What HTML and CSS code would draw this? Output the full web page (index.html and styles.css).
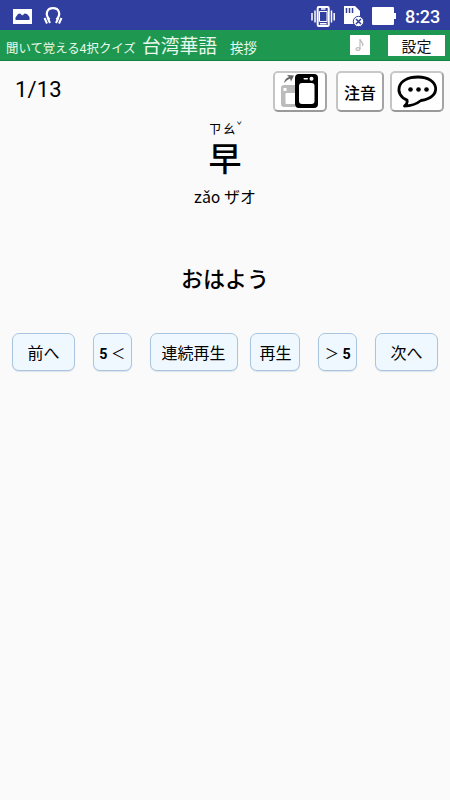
FILE: index.html
```html
<!DOCTYPE html>
<html lang="ja">
<head>
<meta charset="utf-8">
<title>台湾華語</title>
<link rel="stylesheet" href="styles.css">
</head>
<body>
<div class="status">
  <svg class="s-pic" width="19" height="15" viewBox="0 0 19 15"><path fill="#fff" fill-rule="evenodd" d="M0 0h19v15H0zM2.500 11h14V8L14 5l-2.500-.5L9.500 6.500 7 4.500 5 5 2.500 8.500z"/></svg>
  <svg class="s-head" width="20" height="18" viewBox="0 0 20 18" fill="none" stroke="#fff"><path stroke-width="2.200" d="M6.500 12.500C1.500 7 4 1.200 10 1.200s8.500 5.800 3.500 11.300"/><path stroke-width="2" d="M4.500 10.500l2.500 5.500M15.500 10.500l-2.500 5.500M1.500 11l2.500 5.500M18.500 11l-2.500 5.500"/></svg>
  <svg class="s-vib" width="24" height="21" viewBox="0 0 24 21" fill="none" stroke="#fff"><rect x="6.700" y="1" width="11" height="19" rx="1" stroke-width="2"/><path stroke-width="1.500" d="M10 3h4.500M9 17.800h6.500"/><path stroke-width="1" d="M8.500 5.500h7.500v10H8.500z"/><path stroke-width="1.500" d="M4 4.500v12M1 7v7.500M20.500 4.500v12M23.200 7v7.500"/></svg>
  <svg class="s-sd" width="22" height="21" viewBox="0 0 22 21"><path fill="#fff" d="M1 0h11l5 5v13H1z"/><path stroke="#303f9f" stroke-width="1.500" d="M3.500 2v5M6.500 2v5M9.500 2v5"/><circle cx="15.500" cy="15.500" r="5.200" fill="#fff" stroke="#303f9f"/><path d="M13 13l5 5m0-5l-5 5" stroke="#303f9f" stroke-width="1.500"/></svg>
  <svg class="s-bat" width="24" height="18" viewBox="0 0 24 18"><path fill="#fff" d="M1 0h20q1 0 1 1v5h2v6h-2v5q0 1-1 1H1q-1 0-1-1V1q0-1 1-1z"/></svg>
  <span class="clock">8:23</span>
</div>
<header class="bar">
  <span class="quiz">聞いて覚える4択クイズ</span>
  <span class="lang">台湾華語</span>
  <span class="topic">挨拶</span>
  <span class="note"><svg width="10" height="14" viewBox="0 0 10 14" fill="none" stroke="#bbb" stroke-width="1.200"><ellipse cx="3" cy="11" rx="2" ry="1.500" fill="#eee"/><path d="M5 11V1c0 3 4 3 2.500 7"/></svg></span>
  <span class="settings">設定</span>
</header>
<main>
  <div class="tools">
    <span class="count">1/13</span>
    <span class="tool flip"><svg width="54" height="41" viewBox="0 0 54 41"><path fill="#bbb" fill-rule="evenodd" d="M11 14h11v22H11q-3 0-3-3V17q0-3 3-3zM12.500 23v9q0 1 1 1H22V22h-8.500q-1 0-1 1zM10.500 17v3h3v-3z"/><path d="M11 12q1-5 5-6l-2-2 7 .5-3 6-1-3q-3 1-6 4.500z" fill="#666"/><rect x="22" y="3" width="23" height="34" rx="4"/><rect x="26" y="12" width="15.500" height="21" rx="3" fill="#fff"/><rect x="30.500" y="7" width="4.500" height="1.500" rx=".7" fill="#fff"/><circle cx="38.500" cy="7.700" r="2" fill="#fff"/></svg></span>
    <span class="tool zhuyin">注音</span>
    <span class="tool chat"><svg width="54" height="41" viewBox="0 0 54 41"><path d="M17 29C4 24 6 6 28 6s24 21 3 23.500Q24 35 14.500 35 18 32 17 29z" fill="#fff" stroke="#000" stroke-width="2.800" stroke-linejoin="round"/><circle cx="20.500" cy="18.500" r="2.300"/><circle cx="28.500" cy="18.500" r="2.300"/><circle cx="36.500" cy="18.500" r="2.300"/></svg></span>
  </div>
  <section class="card">
    <div class="bopomofo"><span>ㄗ</span><span>ㄠ</span><span class="tone">ˇ</span></div>
    <div class="word">早</div>
    <div class="pinyin">zǎo ザオ</div>
    <div class="meaning">おはよう</div>
  </section>
  <nav class="controls">
    <button class="prev">前へ</button>
    <button class="back5"><b>5</b> ＜</button>
    <button class="loop">連続再生</button>
    <button class="play">再生</button>
    <button class="fwd5">＞ <b>5</b></button>
    <button class="next">次へ</button>
  </nav>
</main>
</body>
</html>
```
FILE: styles.css
```css
* { box-sizing: border-box; }
body {
  margin: 0;
  height: 800px;
  overflow: hidden;
  background: #fafafa;
  color: #000;
  font-family: Roboto, "Noto Sans CJK JP", sans-serif;
  white-space: nowrap;
}
svg { display: block; flex: none; }
.status {
  height: 30px;
  background: #303f9f;
  display: flex;
  align-items: center;
  padding: 2px 10px 0 13px;
  color: #fff;
}
.s-head { margin-left: 11px; }
.s-vib { margin-left: auto; }
.s-sd { margin-left: 8px; }
.s-bat { margin-left: 7px; }
.clock { width: 35px; margin-left: 9px; font-size: 18px; font-weight: 500; letter-spacing: -.1px; }
.bar {
  height: 31px;
  background: #1e9850;
  border-bottom: 1px solid #168043;
  color: #e9f8ed;
  display: flex;
  align-items: center;
  padding: 0 5px 0 6px;
}
.quiz { width: 136px; font-size: 12.400px; padding-top: 5px; }
.lang { width: 88px; font-size: 18.800px; line-height: 28px; padding-top: 3px; }
.topic { font-size: 13.500px; padding-top: 3px; }
.note {
  width: 20px;
  height: 20px;
  margin-left: auto;
  background: #fff;
  display: flex;
  align-items: center;
  justify-content: center;
}
.settings {
  width: 57px;
  height: 21px;
  margin-left: 18px;
  background: #fff;
  color: #111;
  font-size: 15px;
  line-height: 24px;
  text-align: center;
}
.tools { display: flex; padding: 10px 6px 0 15px; height: 53px; }
.count { font-size: 22px; line-height: 38px; margin-right: auto; letter-spacing: .15px; }
.tool {
  width: 54px;
  height: 41px;
  border: 2px solid #b0b0b0;
  border-color: #c8c8c8 #a4a4a4 #999 #c4c4c4;
  border-radius: 5px;
  background: #fff;
  display: flex;
  align-items: center;
  justify-content: center;
}
.zhuyin { width: 48px; margin: 0 6px 0 9px; font-size: 16px; font-weight: 500; }
.card { text-align: center; }
.bopomofo {
  height: 23px;
  display: flex;
  justify-content: center;
  gap: 1px;
  font-size: 13px;
  line-height: 27px;
  font-family: "Noto Sans CJK TC", sans-serif;
}
.tone { width: 5px; font-size: 9px; line-height: 24px; }
.word { height: 43px; font-size: 33px; line-height: 46px; font-weight: 500; }
.pinyin { height: 33px; font-size: 16px; line-height: 35px; }
.meaning { margin-top: 44px; height: 44px; font-size: 22px; line-height: 46px; font-weight: 500; }
.controls { display: flex; padding: 32px 12px 0 12px; justify-content: space-between; }
.controls button {
  height: 38px;
  padding: 0;
  border: 1px solid #a9c5df;
  border-radius: 7px;
  background: #f0f8ff;
  box-shadow: 0 1px 1px #dce3e8;
  color: #000;
  font: 16px Roboto, "Noto Sans CJK JP", sans-serif;
}
.controls b { font-weight: 700; }
.controls .prev { width: 63px; }
.controls .back5 { width: 39px; font-size: 14.300px; }
.controls .loop { width: 88px; }
.controls .play { width: 50px; margin-left: -5px; }
.controls .fwd5 { width: 39px; font-size: 14.300px; }
.controls .next { width: 63px; }
```
